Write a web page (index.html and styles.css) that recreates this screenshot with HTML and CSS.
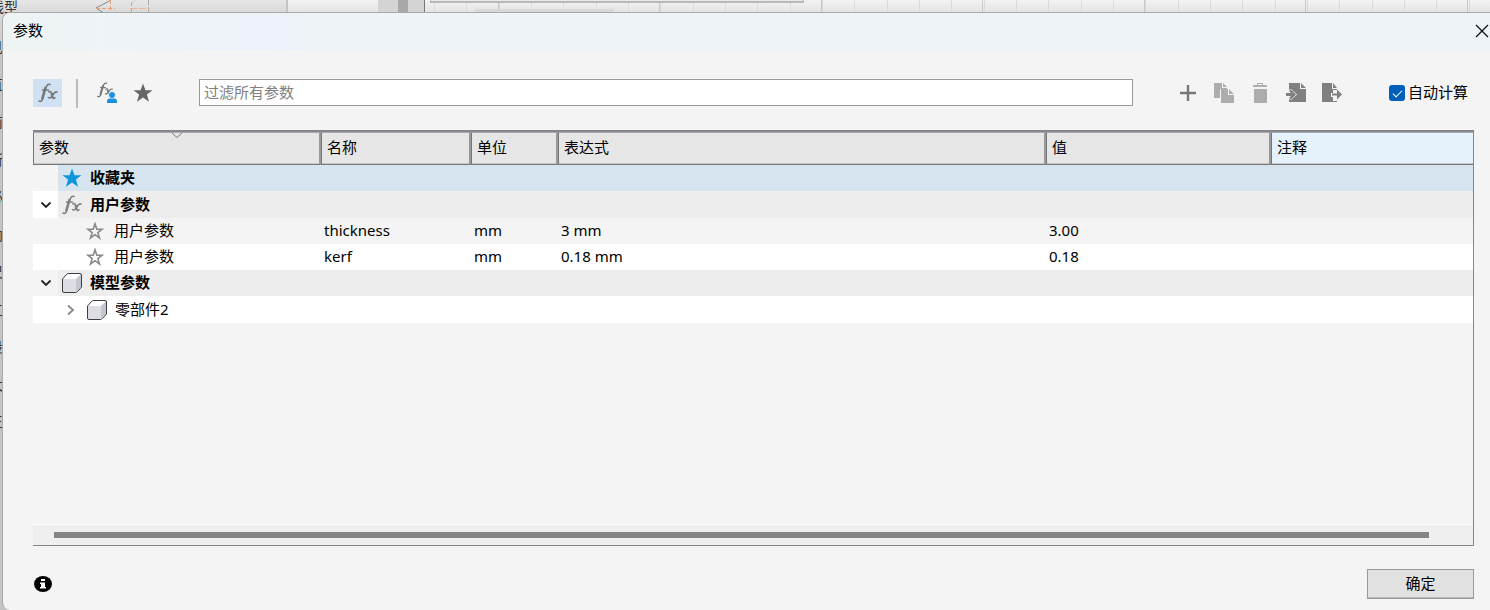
FILE: index.html
```html
<!DOCTYPE html>
<html lang="zh-CN">
<head>
  <meta charset="UTF-8" />
  <title>参数</title>
  <meta name="viewport" content="width=device-width, initial-scale=1.0" />
  <link rel="stylesheet" href="styles.css">
</head>
<body>
  <!-- shared icons -->
  <svg class="defs" aria-hidden="true">
    <symbol id="star" viewBox="0 0 20 20">
      <path d="M10 .5l2.500 6.700h7l-5.600 4.300 2.100 7.200L10 14.500l-6 4.200 2.100-7.200L.5 7.200h7z"/>
    </symbol>
    <symbol id="star-line" viewBox="0 0 20 20">
      <path d="M10 2l2 6h6l-4.800 3.800 1.800 6-5-3.700-5 3.700 1.800-6L2 8h6z" fill="none" stroke="#8a8a8a" stroke-width="1.800"/>
    </symbol>
    <symbol id="fx" viewBox="0 0 20 20">
      <path d="M1 18c2 1 3.300-.3 4-3L8 4.500C8.700 2 10 .8 12 1.500M4.500 7h6M11 9c1.500-1 2.200-.4 2.500 1l1 4c.3 1.600 1.200 1.800 2.500.8M19 9c-1.500-.6-2.500.3-3.500 2l-2 2.700c-1 1.400-1.900 1.700-3 1" fill="none" stroke="currentColor" stroke-width="1.600" stroke-linecap="round"/>
      <path d="M4 16L7.500 4M13.500 10l1 4.500" stroke="currentColor" stroke-width="2.200"/>
    </symbol>
    <symbol id="cube" viewBox="0 0 20 20">
      <path d="M1 6l5-5h13v13l-5 5H1z" fill="#fff"/>
      <path d="M1 6h13v13H1z" fill="#dcdee4"/>
      <path d="M14 6l5-5v13l-5 5z" fill="#c3c6ce"/>
      <path d="M.5 6l4-4.500Q5.500.5 7 .5h11q1.500 0 1.500 1.500v12l-4 4.500q-1 1-2 1H2Q.5 19.500.5 18z" fill="none" stroke="#3b3e43"/>
    </symbol>
    <symbol id="down" viewBox="0 0 12 8">
      <path d="M1.500 1.500L6 6l4.500-4.500" fill="none" stroke="#222" stroke-width="1.800"/>
    </symbol>
  </svg>

  <div class="workspace" aria-hidden="true">
    <div class="browser">
      <ul>
        <li class="first">线型</li><li>见</li><li>直</li><li>前</li><li>所</li><li>必</li><li>向</li><li>尺</li><li>工</li><li>段</li><li>大</li><li>王</li>
      </ul>
      <svg class="sketch" width="56" height="13">
        <path d="M0 8L15 0M0 8l8 5" fill="none" stroke="#888"/>
        <path d="M0 8.500h19M14.500 0v13" fill="none" stroke="#e9a070" stroke-dasharray="4 2"/>
        <path d="M35.500 13V3l4-3M52.500 0v13" fill="none" stroke="#aaa" stroke-dasharray="5 2"/>
        <path d="M34 8.500h20" stroke="#e9b897" stroke-dasharray="7 2"/>
      </svg>
    </div>
    <div class="gutter"></div>
    <div class="scroller"><span></span></div>
    <div class="canvas">
      <div class="canvas-bar"></div>
      <div class="canvas-tag"></div>
    </div>
  </div>

  <main class="dialog" role="dialog" aria-labelledby="dialogTitle">
    <header class="titlebar">
      <h1 id="dialogTitle">参数</h1>
      <button class="close" aria-label="关闭">
        <svg width="14" height="14"><path d="M1 1l12 12M13 1L1 13" stroke="#111" stroke-width="1.300"/></svg>
      </button>
    </header>

    <div class="content">
      <div class="toolbar">
        <div class="filters">
          <button class="tool active" aria-label="所有参数"><svg width="20" height="20"><use href="#fx"/></svg></button>
          <span class="divider"></span>
          <button class="tool" aria-label="用户参数">
            <svg width="22" height="22" viewBox="0 0 22 22">
              <use href="#fx" width="16" height="16" x="1"/>
              <circle cx="16" cy="13" r="3.500" fill="#1a8fe3" stroke="#f4f4f4"/>
              <path d="M11 21v-1.500q0-3 3-3h4q3 0 3 3V21z" fill="#1a8fe3"/>
            </svg>
          </button>
          <button class="tool" aria-label="收藏夹"><svg width="20" height="20" fill="#666"><use href="#star"/></svg></button>
        </div>

        <input type="text" class="filter-box" aria-label="过滤所有参数" placeholder="过滤所有参数" />

        <div class="actions">
          <button class="tool" aria-label="添加"><svg width="20" height="20"><path d="M10 2v16M2 10h16" stroke="#777" stroke-width="2.400"/></svg></button>
          <button class="tool" aria-label="复制">
            <svg width="20" height="20" fill="#adadad"><path d="M0 0h8v5h5v1H6v9H0zM9 0l4 4H9z"/><path d="M7 6h7v6h6v8H7zM15 6l5 5h-5z"/></svg>
          </button>
          <button class="tool" aria-label="删除">
            <svg width="20" height="20" fill="#adadad"><path d="M3 2h4V0h6v2h4v2H3zM8 1v1h4V1zM4 6h13v14H4z" fill-rule="evenodd"/></svg>
          </button>
          <button class="tool" aria-label="导入">
            <svg width="20" height="20" fill="#808080"><path d="M3 0h11v6h6v13H3v-3l2 1 6-5.500L5 6 3 7zM15 0l5 5h-5z"/><path d="M0 10h5L3 8l2-1.500 5 5-5 5L3 15l2-2H0z"/></svg>
          </button>
          <button class="tool" aria-label="导出">
            <svg width="20" height="20" fill="#808080"><path d="M0 0h10v6h5v1h-4v3H9v4h2v4h4v1H0zM11 0l4 5h-4z"/><path d="M10 10.500h5v-4l5 5-5 5v-4h-5z"/></svg>
          </button>
        </div>

        <label class="auto"><input type="checkbox" checked /><span class="name">自动计算</span></label>
      </div>

      <div class="grid">
        <table>
          <colgroup>
            <col class="c-param"><col class="c-name"><col class="c-unit"><col><col class="c-value"><col class="c-note">
          </colgroup>
          <thead>
            <tr>
              <th class="sorted">参数<svg width="10" height="6"><path d="M0 0l5 4.500L10 0" fill="none" stroke="#777"/></svg></th>
              <th>名称</th><th>单位</th><th>表达式</th><th>值</th><th class="hot">注释</th>
            </tr>
          </thead>
          <tbody>
            <tr class="group favorites">
              <td colspan="6"><div class="node"><span class="toggle"></span><svg class="icon" fill="#0d96dc"><use href="#star"/></svg><span class="name">收藏夹</span></div></td>
            </tr>
            <tr class="group">
              <td colspan="6"><div class="node"><button class="toggle white" aria-label="折叠"><svg width="12" height="8"><use href="#down"/></svg></button><svg class="icon"><use href="#fx"/></svg><span class="name">用户参数</span></div></td>
            </tr>
            <tr>
              <td><div class="node child"><svg class="icon small"><use href="#star-line"/></svg><span class="name">用户参数</span></div></td>
              <td>thickness</td><td>mm</td><td>3 mm</td><td>3.00</td><td></td>
            </tr>
            <tr class="white">
              <td><div class="node child"><svg class="icon small"><use href="#star-line"/></svg><span class="name">用户参数</span></div></td>
              <td>kerf</td><td>mm</td><td>0.18 mm</td><td>0.18</td><td></td>
            </tr>
            <tr class="group">
              <td colspan="6"><div class="node"><button class="toggle" aria-label="折叠"><svg width="12" height="8"><use href="#down"/></svg></button><svg class="icon"><use href="#cube"/></svg><span class="name">模型参数</span></div></td>
            </tr>
            <tr class="white">
              <td colspan="6"><div class="node component"><button class="toggle" aria-label="展开"><svg width="8" height="12"><path d="M1 1.500L6 6l-5 4.500" fill="none" stroke="#888" stroke-width="1.800"/></svg></button><svg class="icon"><use href="#cube"/></svg><span class="name">零部件2</span></div></td>
            </tr>
          </tbody>
        </table>
        <div class="scrollbar"><div class="thumb"></div></div>
      </div>

      <footer>
        <button class="info" aria-label="信息">
          <svg width="18" height="16"><ellipse cx="9" cy="8" rx="9" ry="8"/><path d="M7 3h4v2H7zM6 6.500h5V11h1v1.500H6V11h1V8H6z" fill="#fff"/></svg>
        </button>
        <button class="ok"><span class="name">确定</span></button>
      </footer>
    </div>
  </main>
</body>
</html>
```

FILE: styles.css
```css
* {
  box-sizing: border-box;
}

body {
  margin: 0;
  min-height: 100vh;
  display: grid;
  grid-template-columns: minmax(0, 1fr);
  font-family: "Noto Sans", "Noto Sans CJK SC", sans-serif;
  font-size: 15px;
  line-height: 20px;
  color: #000;
  background: #c8c8c8;
}

button, input {
  font: inherit;
  color: inherit;
}

button {
  display: flex;
  align-items: center;
  justify-content: center;
  padding: 0;
  border: none;
  background: none;
}

.defs {
  position: absolute;
  width: 0;
  height: 0;
}

/* application behind the dialog */
.workspace, .dialog {
  grid-area: 1 / 1;
}

.workspace {
  display: flex;
  overflow: hidden;
  background: linear-gradient(#f3f3f3, #e2e2e2 13px, #c8c8c8 60px);
}

.browser {
  display: flex;
  width: 288px;
  background: linear-gradient(#e6e6e6, #d8d8d8 13px, #c4c4c4 60px);
  border-right: 2px solid #c4c4c4;
}

.browser ul {
  width: 96px;
  margin: 0;
  padding: 0;
  list-style: none;
  font-size: 14px;
  color: #333;
}

.browser li {
  width: 3px;
  height: 20px;
  margin-bottom: 17px;
  display: flex;
  justify-content: flex-end;
  overflow: hidden;
}

.browser li:nth-child(even) {
  margin-bottom: 18px;
}

.browser .first {
  width: 18px;
  margin-top: -3px;
  margin-bottom: 20px;
  white-space: nowrap;
}

.gutter {
  width: 90px;
}

.scroller {
  width: 47px;
  padding-left: 20px;
  background: #d4d4d4;
  border-right: 1px solid #777;
}

.scroller span {
  display: block;
  width: 10px;
  height: 100%;
  background: #a8a8a8;
}

.canvas {
  flex: 1;
  padding-left: 5px;
  background:
    repeating-linear-gradient(90deg, #c8c8c8 0 1px, transparent 1px 161px, #c8c8c8 161px 162px, transparent 162px 323px) 73px 0 no-repeat,
    repeating-linear-gradient(90deg, #dadada 0 1px, transparent 1px 32px, #dadada 32px 33px, transparent 33px 65px, #dadada 65px 66px, transparent 66px 97px) 9px 0 no-repeat;
}

.canvas-bar {
  width: 374px;
  height: 3px;
  background: #e8e8e8;
  border: 1px solid #b8bab8;
  border-width: 0 1px 2px;
}

.canvas-tag {
  width: 139px;
  height: 4px;
  margin: 6px 0 0 45px;
  background: #d8d8d8;
}

/* dialog */
.dialog {
  display: flex;
  flex-direction: column;
  margin: 12px 0 0 2px;
  border: 1px solid #a9a9a9;
  border-width: 1px 0 0 1px;
  border-radius: 8px 0 0 8px;
  overflow: hidden;
  background: #f4f4f4;
}

.titlebar {
  display: flex;
  align-items: center;
  justify-content: space-between;
  height: 37px;
  padding: 0 1px 2px 10px;
  background: linear-gradient(90deg, #eef4f4, #edf2fb 280px, #eef3f8 310px);
}

.titlebar h1 {
  margin: 0;
  padding-bottom: 2px;
  font-size: 15px;
  font-weight: normal;
}

.content {
  flex: 1;
  display: flex;
  flex-direction: column;
  padding: 29px 16px 11px 30px;
}

.toolbar {
  display: flex;
  align-items: flex-start;
  height: 51px;
}

.filters {
  display: flex;
  width: 166px;
  color: #777;
}

.tool {
  width: 29px;
  height: 28px;
}

.active {
  background: #cfe1f3;
}

.divider {
  width: 2px;
  height: 29px;
  margin: 0 14px;
  background: #bbb;
}

.filters .tool + .tool {
  margin-left: 7px;
}

.filter-box {
  flex: 1;
  min-width: 0;
  height: 27px;
  padding: 0 4px 2px;
  border: 1px solid #999;
  background: #fff;
}

.filter-box::placeholder {
  color: #808080;
}

.actions {
  display: flex;
  gap: 7px;
  margin: 0 42px 0 41px;
}

.name {
  padding-bottom: 2px;
}

.auto {
  display: flex;
  align-items: center;
  gap: 3px;
  height: 28px;
  padding-right: 6px;
}

.auto input {
  width: 16px;
  height: 16px;
  margin: 0;
  appearance: none;
  border-radius: 3px;
  background: #005fb8;
}

.auto input:checked::before {
  content: "";
  display: block;
  width: 8px;
  height: 4px;
  margin: 5px 4px;
  border: solid #fff;
  border-width: 0 0 1px 1px;
  transform: rotate(-45deg);
}

/* parameter table */
.grid {
  flex: 1;
  display: flex;
  flex-direction: column;
  justify-content: space-between;
  border: solid #83868e;
  border-width: 2px 1px 1px 0;
}

table {
  width: 100%;
  table-layout: fixed;
  border-collapse: separate;
  border-spacing: 0;
}

.c-param { width: 288px; }
.c-name { width: 150px; }
.c-unit { width: 87px; }
.c-value { width: 225px; }
.c-note { width: 202px; }

th {
  position: relative;
  height: 33px;
  padding: 0 5px 4px;
  border: solid #777;
  border-width: 1px 2px 1px 1px;
  border-top-color: #aaa;
  border-right-color: #999;
  box-shadow: inset 0 -1px #c6c6c6;
  background: #e6e6e6;
  font-weight: normal;
  text-align: left;
}

th.hot {
  border-right: none;
  background: #e5f1fb;
}

.sorted svg {
  position: absolute;
  top: 0;
  left: calc(50% - 5px);
}

td {
  height: 26px;
  padding: 0 3px 2px;
}

tbody tr:nth-child(4n + 2) td {
  height: 27px;
}

td:first-child {
  padding: 0;
}

.white {
  background: #fff;
}

.group {
  background: #ededed;
  font-weight: bold;
}

.white .name {
  font-weight: normal;
}

.favorites {
  background: #d6e4ef;
}

.node {
  display: flex;
  align-items: center;
  height: 100%;
}

.toggle {
  align-self: stretch;
  width: 25px;
  background: #f4f4f4;
}

.toggle.white, .white .toggle {
  background: #fff;
}

.icon {
  width: 20px;
  height: 20px;
  margin: 0 8px 0 4px;
  color: #808080;
}

.small {
  width: 18px;
  height: 18px;
  margin-right: 10px;
}

.child {
  padding-left: 49px;
}

.component {
  padding-left: 25px;
}

.scrollbar {
  height: 21px;
  padding: 7px 44px 0 21px;
  border-top: 1px solid #fff;
  background: #efefef;
}

.thumb {
  height: 6px;
  background: #848484;
}

footer {
  display: flex;
  align-items: center;
  justify-content: space-between;
  margin-top: 23px;
}

.info {
  padding-left: 1px;
}

.ok {
  width: 107px;
  height: 30px;
  border: 1px solid #999;
  box-shadow: inset 0 -1px #bbb;
  background: #e1e1e1;
}
```
